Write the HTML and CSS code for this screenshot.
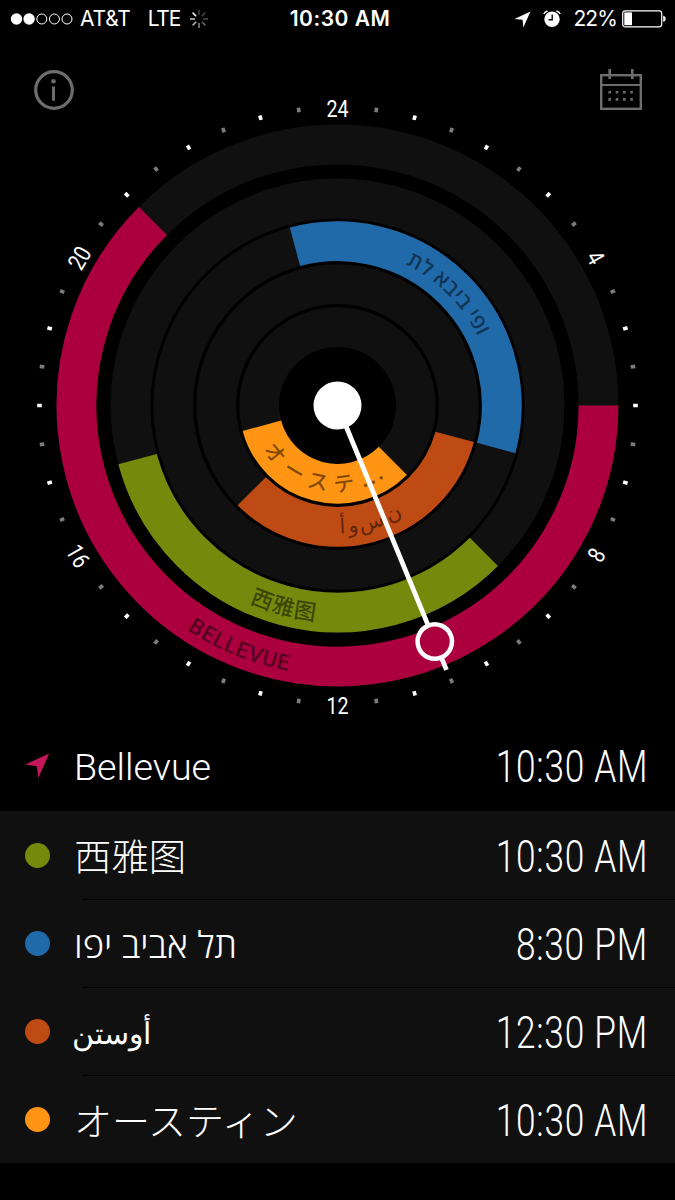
FILE: index.html
```html
<!DOCTYPE html>
<html lang="en">
<head>
    <meta charset="UTF-8">
    <meta name="viewport" content="width=device-width, initial-scale=1.0">
    <title>World Clock</title>
    <link rel="stylesheet" href="styles.css">
</head>
<body>
    <header class="status-bar">
        <div class="status-left">
            <svg class="signal" width="64" height="14" viewBox="0 0 64 14">
                <circle class="on" cx="6.5" cy="7" r="5.7"/>
                <circle class="on" cx="19.1" cy="7" r="5.7"/>
                <circle cx="31.8" cy="7" r="5"/>
                <circle cx="44.4" cy="7" r="5"/>
                <circle cx="57" cy="7" r="5"/>
            </svg>
            <span class="carrier">AT&amp;T</span>
            <span class="network">LTE</span>
            <svg class="spinner" width="20" height="20" viewBox="-10 -10 20 20">
                <path d="M0-4V-9" opacity=".25"/>
                <path d="M0-4V-9" opacity=".25" transform="rotate(45)"/>
                <path d="M0-4V-9" opacity=".3" transform="rotate(90)"/>
                <path d="M0-4V-9" opacity=".4" transform="rotate(135)"/>
                <path d="M0-4V-9" opacity=".55" transform="rotate(180)"/>
                <path d="M0-4V-9" opacity=".7" transform="rotate(225)"/>
                <path d="M0-4V-9" opacity=".8" transform="rotate(270)"/>
                <path d="M0-4V-9" transform="rotate(315)"/>
            </svg>
        </div>
        <div class="status-time">10:30 AM</div>
        <div class="status-right">
            <svg class="location" width="17" height="17" viewBox="0 0 17 17">
                <path d="M16.5 .5 9.3 16.5 8.6 8.7.5 8z" fill="#fff"/>
            </svg>
            <svg class="alarm" width="18" height="18" viewBox="0 0 18 18">
                <circle cx="9" cy="9.2" r="7.7" fill="#fff"/>
                <path d="M9.2 4.5V9.7H5.6" fill="none" stroke="#000" stroke-width="1.4"/>
                <path d="M.8 4Q1.8 1.6 4.6 1M17.2 4Q16.2 1.6 13.4 1" fill="none" stroke="#fff" stroke-width="1.5"/>
            </svg>
            <span class="percent">22%</span>
            <svg class="battery" width="44" height="18" viewBox="0 0 44 18">
                <rect x=".7" y=".8" width="39" height="16" rx="2.5" fill="none" stroke="#fff" stroke-width="1.2"/>
                <rect x="2.3" y="2.4" width="7.7" height="12.8" fill="#fff"/>
                <path d="M41.2 5.5Q43.8 6.5 43.8 8.8T41.2 12.1z" fill="#fff"/>
            </svg>
        </div>
    </header>

    <section class="clock">
        <svg class="dial" width="675" height="685" viewBox="0 38 675 685">
            <defs>
                <path id="path-bellevue" d="M67.5 405.5A270 270 0 0 0 607.5 405.5"/>
                <path id="path-seattle" d="M121.5 405.5A216 216 0 0 0 553.5 405.5"/>
                <path id="path-telaviv" d="M181 405.5A156.5 156.5 0 0 1 494 405.5"/>
                <path id="path-austin-ar" d="M209.5 405.5A128 128 0 0 0 465.5 405.5"/>
                <path id="path-austin-ja" d="M251.5 405.5A86 86 0 0 0 423.5 405.5"/>
            </defs>

            <!-- info -->
            <g class="icon">
                <circle cx="54" cy="90" r="18.3" stroke-width="3.2"/>
                <path d="M53.5 86.5V100.7" stroke-width="3"/>
                <circle class="icon-dot" cx="53.5" cy="81.3" r="2.3"/>
            </g>
            <!-- calendar -->
            <g class="icon">
                <rect x="601.2" y="75.2" width="39.6" height="33.6" stroke-width="2.4"/>
                <path d="M601 85H641" stroke-width="2.2"/>
                <path d="M609.7 69V79M632.3 69V79" stroke-width="2.6"/>
                <path d="M608.4 92.2H634M608.4 99.4H634" stroke-width="2.6" stroke-dasharray="2.6 4.7"/>
            </g>

            <!-- hour ticks, 0 at the top -->
            <g class="ticks" transform="rotate(-90 337.5 405.5)">
                <circle class="tick-half" cx="337.5" cy="405.5" r="298" pathLength="360" stroke-dasharray=".7 14.3" stroke-dashoffset="-7.15"/>
                <circle class="tick-hour" cx="337.5" cy="405.5" r="298" pathLength="360" stroke-dasharray=".7 14.3 .7 14.3 .7 29.3" stroke-dashoffset="-14.65"/>
            </g>
            <g class="numerals">
                <text transform="translate(337.5 108.7) scale(.82 1)" y="8.5">24</text>
                <text transform="translate(595.6 257.5) rotate(60) scale(.82 1)" y="8.5">4</text>
                <text transform="translate(596.5 555) rotate(-60) scale(.82 1)" y="8.5">8</text>
                <text transform="translate(337.5 705.5) scale(.82 1)" y="8.5">12</text>
                <text transform="translate(78 556) rotate(60) scale(.82 1)" y="8.5">16</text>
                <text transform="translate(79.3 258) rotate(-60) scale(.82 1)" y="8.5">20</text>
            </g>

            <!-- rings -->
            <g class="ring">
                <circle cx="337.5" cy="405.5" r="261"/>
                <circle cx="337.5" cy="405.5" r="207"/>
                <circle cx="337.5" cy="405.5" r="164.3"/>
                <circle cx="337.5" cy="405.5" r="121.3"/>
                <circle cx="337.5" cy="405.5" r="78.3"/>
            </g>

            <!-- working hours -->
            <g class="arc">
                <path class="red" d="M598.5 405.5A261 261 0 1 1 152.95 220.95"/>
                <path class="green" d="M483.87 551.87A207 207 0 0 1 137.55 459.08"/>
                <path class="blue" d="M294.98 246.8A164.3 164.3 0 0 1 496.2 448.02"/>
                <path class="rust" d="M454.67 436.89A121.3 121.3 0 0 1 251.73 491.27"/>
                <path class="orange" d="M392.87 460.87A78.3 78.3 0 0 1 261.87 425.77"/>
            </g>

            <g class="labels">
                <text class="label-bellevue"><textPath href="#path-bellevue" startOffset="31.2%">BELLEVUE</textPath></text>
                <text class="label-seattle"><textPath href="#path-seattle" startOffset="36.6%">西雅图</textPath></text>
                <text class="label-telaviv"><textPath href="#path-telaviv" startOffset="64.3%">תל אביב יפו</textPath></text>
                <!-- arabic letters are set one by one along the ring -->
                <g class="label-austin-ar">
                    <text><textPath href="#path-austin-ar" startOffset="50.6%">أ</textPath></text>
                    <text><textPath href="#path-austin-ar" startOffset="52.9%">و</textPath></text>
                    <text><textPath href="#path-austin-ar" startOffset="55.7%">س</textPath></text>
                    <text><textPath href="#path-austin-ar" startOffset="61.8%">ت&zwj;</textPath></text>
                    <text><textPath href="#path-austin-ar" startOffset="63.2%">ن</textPath></text>
                </g>
                <text class="label-austin-ja"><textPath href="#path-austin-ja" startOffset="17%">オーステ<tspan class="dots">...</tspan></textPath></text>
            </g>

            <!-- hand -->
            <g class="hand" transform="rotate(-22.4 337.5 405.5)">
                <path d="M337.5 405.5V642M337.5 679V691.5"/>
                <circle class="hub" cx="337.5" cy="405.5" r="24"/>
                <circle class="knob" cx="337.5" cy="660.8" r="17.2"/>
            </g>
        </svg>
    </section>

    <main class="cities">
        <div class="city home">
            <svg class="marker" width="26" height="26" viewBox="0 0 26 26">
                <path d="M24.2 -.5 13.3 24 11.8 12.2 .2 10.5z" fill="#c2185b"/>
            </svg>
            <span class="name">Bellevue</span>
            <span class="time">10:30 AM</span>
        </div>
        <div class="city">
            <span class="marker dot dot-green"></span>
            <span class="name name-zh" lang="zh-CN">西雅图</span>
            <span class="time">10:30 AM</span>
        </div>
        <div class="city">
            <span class="marker dot dot-blue"></span>
            <span class="name name-he" lang="he">תל אביב יפו</span>
            <span class="time">8:30 PM</span>
        </div>
        <div class="city">
            <span class="marker dot dot-rust"></span>
            <span class="name name-ar" lang="ar">أوستن</span>
            <span class="time">12:30 PM</span>
        </div>
        <div class="city">
            <span class="marker dot dot-orange"></span>
            <span class="name name-ja" lang="ja">オースティン</span>
            <span class="time">10:30 AM</span>
        </div>
    </main>
</body>
</html>
```

FILE: styles.css
```css
* {
    box-sizing: border-box;
}
body {
    margin: 0;
    width: 675px;
    height: 1200px;
    overflow: hidden;
    background: #000;
    color: #fff;
    font-family: Roboto, "Noto Sans CJK SC", sans-serif;
}

/* status bar */
.status-bar {
    display: grid;
    grid-template-columns: 1fr auto 1fr;
    align-items: center;
    height: 38px;
    padding: 0 10px;
    font-family: Inter, sans-serif;
    font-size: 21px;
    line-height: 38px;
}
.status-left,
.status-right {
    display: flex;
    align-items: center;
}
.status-right {
    justify-content: flex-end;
}
.signal circle {
    fill: none;
    stroke: #fff;
    stroke-width: 1;
}
.signal .on {
    fill: #fff;
    stroke: none;
}
.carrier {
    margin-left: 6px;
    letter-spacing: -0.2px;
}
.network {
    margin-left: 17px;
    letter-spacing: -1.2px;
}
.spinner {
    margin-left: 9px;
}
.spinner path {
    stroke: #fff;
    stroke-width: 1.5;
}
.status-time {
    padding-left: 5px;
    font-weight: 600;
    letter-spacing: 0.5px;
}
.alarm {
    margin-left: 11px;
}
.percent {
    margin-left: 11px;
    letter-spacing: -0.9px;
}
.battery {
    margin-left: 5px;
    margin-right: -1px;
}
.location,
.alarm {
    margin-right: 1px;
}

/* dial */
.clock {
    height: 685px;
}
.dial {
    display: block;
}
.icon {
    fill: none;
    stroke: #6d6d6d;
}
.icon-dot {
    fill: #6d6d6d;
    stroke: none;
}
.ticks circle {
    fill: none;
    stroke-width: 4.6;
}
.tick-half {
    stroke: #7c7c7c;
}
.tick-hour {
    stroke: #fff;
}
.numerals text {
    fill: #fff;
    font-size: 24px;
    text-anchor: middle;
}
.ring circle,
.arc path {
    fill: none;
    stroke-width: 39.8;
}
.ring circle {
    stroke: #101010;
}
.arc .red {
    stroke: #ac003e;
}
.arc .green {
    stroke: #758a0d;
}
.arc .blue {
    stroke: #216aaa;
}
.arc .rust {
    stroke: #bd4b13;
}
.arc .orange {
    stroke: #ff9512;
}
.labels text {
    fill: #000;
    fill-opacity: 0.5;
    font-size: 21px;
    font-weight: 500;
}
.labels .label-bellevue {
    font-size: 22px;
    letter-spacing: 0.8px;
}
.labels .label-seattle {
    font-family: "Noto Sans CJK SC", sans-serif;
    font-size: 22px;
    letter-spacing: 1px;
}
.labels .label-telaviv {
    font-family: "Open Sans", "DejaVu Sans", sans-serif;
    font-size: 21.5px;
    font-weight: 600;
    direction: ltr;
    unicode-bidi: bidi-override;
}
.label-telaviv textPath {
    direction: ltr;
    unicode-bidi: bidi-override;
}
.label-austin-ar text {
    font-family: "DejaVu Sans", sans-serif;
    font-size: 21px;
    font-weight: 400;
}
.labels .label-austin-ja {
    font-family: "Noto Sans CJK JP", sans-serif;
    font-size: 21px;
    letter-spacing: 8px;
}
.label-austin-ja .dots {
    letter-spacing: 2.5px;
}
.hand path {
    stroke: #fff;
    stroke-width: 4.8;
}
.hand .hub {
    fill: #fff;
}
.hand .knob {
    fill: #ac003e;
    stroke: #fff;
    stroke-width: 4.5;
}

/* city list */
.city {
    display: grid;
    grid-template-columns: 49px 1fr auto;
    align-items: center;
    position: relative;
    height: 88px;
    padding: 0 27px 0 25px;
    background: #101010;
}
.city + .city + .city::before {
    content: "";
    position: absolute;
    left: 82px;
    right: 0;
    top: 0;
    height: 1px;
    background: #000;
}
.home {
    background: #000;
}
.dot {
    width: 25px;
    height: 25px;
    border-radius: 50%;
}
.dot-green {
    background: #758a0d;
}
.dot-blue {
    background: #216aaa;
}
.dot-rust {
    background: #bd4b13;
}
.dot-orange {
    background: #ff9512;
}
.name {
    justify-self: start;
    font-size: 37.7px;
    font-weight: 300;
    line-height: 88px;
}
.name-zh {
    font-family: "Noto Sans CJK SC", sans-serif;
    font-size: 37.4px;
}
.name-he {
    padding-top: 3px;
    font-family: "Open Sans", "DejaVu Sans", sans-serif;
    font-size: 36.5px;
    line-height: 85px;
}
.name-ar {
    margin-left: -2px;
    padding-top: 7px;
    font-family: "DejaVu Sans", sans-serif;
    font-size: 29.5px;
    line-height: 81px;
}
.name-ja {
    font-family: "Noto Sans CJK JP", sans-serif;
    font-size: 38px;
}
.time {
    padding-top: 5px;
    font-size: 43.5px;
    font-weight: 300;
    letter-spacing: 0.9px;
    line-height: 83px;
    transform: scaleX(0.81);
    transform-origin: right center;
}
.home .time {
    padding-top: 1px;
    line-height: 87px;
}
```
